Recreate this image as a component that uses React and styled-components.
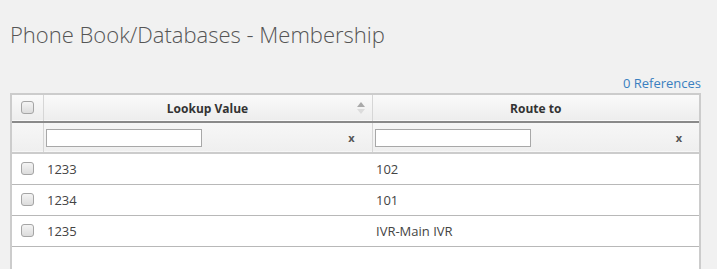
import React from 'react'
import styled, { createGlobalStyle } from 'styled-components'

const GlobalStyle = createGlobalStyle`
  html, body {
    margin: 0;
    padding: 0;
    background: #f1f1f1;
    font-family: "Open Sans", "Liberation Sans", sans-serif;
    overflow: hidden;
  }
`

const rows = [
  { id: 1, lookup: '1233', route: '102' },
  { id: 2, lookup: '1234', route: '101' },
  { id: 3, lookup: '1235', route: 'IVR-Main IVR' }
]

const Page = styled.div`
  display: flex;
  flex-direction: column;
  padding: 18px 16px 0 10px;
  height: 269px;
  box-sizing: border-box;
  overflow: hidden;
`

const Title = styled.h1`
  margin: 0 0 0 0;
  font-size: 22px;
  font-weight: 300;
  color: #555;
  line-height: 32px;
`

const Toolbar = styled.div`
  display: flex;
  justify-content: flex-end;
  margin-top: 23px;
  height: 20px;
  line-height: 20px;
`

const RefLink = styled.a`
  font-size: 13px;
  color: #3a7fc0;
  text-decoration: none;
`

const TableWrap = styled.div`
  flex: 1;
  border: 2px solid #ccc;
  border-bottom: none;
  background: #fff;
`

const Table = styled.table`
  width: 100%;
  border-collapse: collapse;
  table-layout: fixed;
  font-size: 13px;
  color: #444;
`

const HeadRow = styled.tr`
  background: linear-gradient(#fafafa, #ededed);
  height: 27px;
  border-bottom: 2px solid #8a8a8a;
`

const FilterRow = styled.tr`
  background: linear-gradient(#f7f7f7, #efefef);
  height: 31px;
  border-bottom: 2px solid #ccc;
`

const Th = styled.th`
  position: relative;
  font-size: 12px;
  font-weight: 700;
  color: #333;
  text-align: center;
  padding: 0;
  border-left: ${p => (p.$first ? 'none' : '1px solid #d6d6d6')};
`

const FilterCell = styled.td`
  position: relative;
  padding: 0 0 0 ${p => (p.$first ? '0' : '2px')};
  border-left: ${p => (p.$first ? 'none' : '1px solid #d6d6d6')};
`

const FilterInput = styled.input`
  display: block;
  width: 152px;
  height: 14px;
  border: 1px solid #a8a8a8;
  padding: 1px;
  margin: 0;
  background: #fff;
`

const Clear = styled.span`
  position: absolute;
  right: 17px;
  top: 7px;
  font-size: 11px;
  font-weight: 700;
  color: #555;
`

const Sort = styled.span`
  position: absolute;
  right: 7px;
  top: 7px;
  display: flex;
  flex-direction: column;
  gap: 2px;
`

const Tri = styled.span`
  width: 0;
  height: 0;
  border-left: 4px solid transparent;
  border-right: 4px solid transparent;
  ${p => (p.$up ? 'border-bottom: 5px solid #a9a9a9;' : 'border-top: 5px solid #dcdcdc;')}
`

const DataRow = styled.tr`
  height: 31px;
  border-bottom: 1px solid #b8b8b8;
`

const Td = styled.td`
  padding: 0 0 0 ${p => (p.$check ? '0' : '4px')};
  text-align: ${p => (p.$check ? 'center' : 'left')};
`

const Box = styled.span`
  display: inline-block;
  vertical-align: middle;
  width: 11px;
  height: 11px;
  border: 1px solid #a5a5a5;
  border-radius: 3px;
  background: linear-gradient(#f4f4f4, #dcdcdc);
  margin-top: -3px;
`

const App = () => (
  <Page>
    <GlobalStyle />
    <Title>Phone Book/Databases - Membership</Title>
    <Toolbar>
      <RefLink href="#">0 References</RefLink>
    </Toolbar>
    <TableWrap>
      <Table>
        <colgroup>
          <col style={{ width: 31 }} />
          <col style={{ width: 329 }} />
          <col />
        </colgroup>
        <thead>
          <HeadRow>
            <Th $first><Box /></Th>
            <Th>
              Lookup Value
              <Sort><Tri $up /><Tri /></Sort>
            </Th>
            <Th>Route to</Th>
          </HeadRow>
          <FilterRow>
            <FilterCell $first />
            <FilterCell>
              <FilterInput type="text" />
              <Clear>x</Clear>
            </FilterCell>
            <FilterCell>
              <FilterInput type="text" />
              <Clear>x</Clear>
            </FilterCell>
          </FilterRow>
        </thead>
        <tbody>
          {rows.map(r => (
            <DataRow key={r.id}>
              <Td $check><Box /></Td>
              <Td>{r.lookup}</Td>
              <Td>{r.route}</Td>
            </DataRow>
          ))}
        </tbody>
      </Table>
    </TableWrap>
  </Page>
)

export default App
